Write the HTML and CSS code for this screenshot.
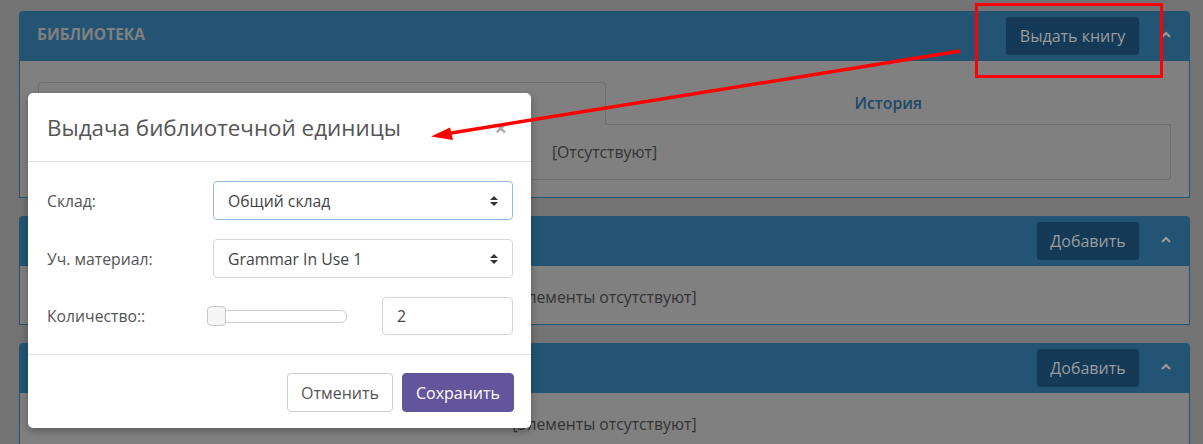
FILE: index.html
```html
<!DOCTYPE html>
<html lang="ru">

<head>
  <meta charset="UTF-8">
  <title>Библиотека</title>
  <link rel="stylesheet" href="styles.css">
</head>

<body>
  <div class="page">
    <!-- библиотека -->
    <div class="panel">
      <div class="panel-head">
        <div class="panel-title">БИБЛИОТЕКА</div>
        <button class="head-btn wide">Выдать книгу</button>
        <div class="collapse">
          <svg width="12" height="8" viewBox="0 0 12 8"><path d="M2 6 L6 2 L10 6" fill="none" stroke="#9a9a9a" stroke-width="2.2"/></svg>
        </div>
      </div>
      <div class="panel-body">
        <div class="tabs">
          <div class="tab active"></div>
          <div class="tab">История</div>
        </div>
        <div class="tab-content">[Отсутствуют]</div>
      </div>
    </div>

    <div class="panel">
      <div class="panel-head">
        <div class="panel-title"></div>
        <button class="head-btn">Добавить</button>
        <div class="collapse">
          <svg width="12" height="8" viewBox="0 0 12 8"><path d="M2 6 L6 2 L10 6" fill="none" stroke="#9a9a9a" stroke-width="2.2"/></svg>
        </div>
      </div>
      <div class="panel-body plain">[Элементы отсутствуют]</div>
    </div>

    <div class="panel">
      <div class="panel-head">
        <div class="panel-title"></div>
        <button class="head-btn">Добавить</button>
        <div class="collapse">
          <svg width="12" height="8" viewBox="0 0 12 8"><path d="M2 6 L6 2 L10 6" fill="none" stroke="#9a9a9a" stroke-width="2.2"/></svg>
        </div>
      </div>
      <div class="panel-body plain">[Элементы отсутствуют]</div>
    </div>
  </div>

  <!-- модальное окно -->
  <div class="modal">
    <div class="modal-header">
      <div class="modal-title">Выдача библиотечной единицы</div>
      <span class="close">×</span>
    </div>
    <div class="modal-body">
      <div class="form-row">
        <label>Склад:</label>
        <div class="select focus">
          <span>Общий склад</span>
          <svg width="10" height="12" viewBox="0 0 10 12"><path d="M1 5 L5 1 L9 5 Z M1 7 L5 11 L9 7 Z" fill="#333"/></svg>
        </div>
      </div>
      <div class="form-row">
        <label>Уч. материал:</label>
        <div class="select">
          <span>Grammar In Use 1</span>
          <svg width="10" height="12" viewBox="0 0 10 12"><path d="M1 5 L5 1 L9 5 Z M1 7 L5 11 L9 7 Z" fill="#333"/></svg>
        </div>
      </div>
      <div class="form-row">
        <label>Количество::</label>
        <div class="count">
          <div class="slider">
            <div class="thumb"></div>
          </div>
          <div class="num">2</div>
        </div>
      </div>
    </div>
    <div class="modal-footer">
      <button class="btn cancel">Отменить</button>
      <button class="btn save">Сохранить</button>
    </div>
  </div>

  <!-- пометка на скриншоте -->
  <svg class="annotation" width="1203" height="444" viewBox="0 0 1203 444">
    <rect x="976.5" y="4.5" width="185" height="72" fill="none" stroke="#ff0000" stroke-width="3"/>
    <line x1="960" y1="51" x2="448" y2="133.5" stroke="#ff0000" stroke-width="3.5"/>
    <path d="M431 136.5 L450 127.5 L453 140 Z" fill="#ff0000"/>
  </svg>
</body>

</html>
```

FILE: styles.css
```css
html,
body {
  height: 444px;
  overflow: hidden;
}

body {
  margin: 0;
  background-color: #737373;
  font-family: "Open Sans", "Noto Sans", sans-serif;
  font-size: 15.75px;
  color: #333;
}

button {
  font-family: inherit;
}

.page {
  height: 444px;
  overflow: hidden;
  padding: 11px 13px 0 19px;
  box-sizing: border-box;
}

.panel {
  margin-bottom: 18px;
}

.panel-head {
  height: 50px;
  background-color: #245474;
  border-radius: 4px 4px 0 0;
  display: flex;
  align-items: center;
  padding-left: 18px;
}

.panel-title {
  flex: 1;
  font-size: 15.5px;
  font-weight: bold;
  color: #808080;
  margin-top: -4px;
}

.head-btn {
  height: 38px;
  width: 102px;
  background-color: #143a58;
  color: #9c9c9c;
  border: none;
  border-radius: 3px;
  font-size: 16px;
}

.head-btn.wide {
  width: 133px;
}

.collapse {
  width: 51px;
  display: flex;
  justify-content: center;
  padding-left: 2px;
  padding-bottom: 2px;
  box-sizing: border-box;
}

.panel-body {
  background-color: #808080;
  border: 1px solid #245474;
  border-top: none;
  padding: 21px 18px 17px;
}

.panel-body.plain {
  padding: 0;
  height: 58px;
  line-height: 62px;
  text-align: center;
}

.tabs {
  display: flex;
  height: 43px;
}

.tab {
  flex: 1;
  display: flex;
  justify-content: center;
  align-items: center;
  color: #1f4868;
  font-weight: 600;
  border-bottom: 1px solid #6e6e6e;
}

.tab.active {
  border: 1px solid #6e6e6e;
  border-bottom: none;
  border-radius: 4px 4px 0 0;
}

.tab-content {
  height: 54px;
  border: 1px solid #6e6e6e;
  border-top: none;
  border-radius: 0 0 4px 4px;
  display: flex;
  justify-content: center;
  align-items: center;
}

/* модальное окно */
.modal {
  position: absolute;
  left: 28px;
  top: 93px;
  width: 503px;
  background-color: #fff;
  border-radius: 5px;
  box-shadow: 0 3px 9px rgba(0, 0, 0, 0.3);
  color: #555;
}

.modal-header {
  padding: 19px 19px;
  border-bottom: 1px solid #e0e0e0;
  display: flex;
  align-items: center;
  height: 30px;
}

.modal-title {
  flex: 1;
  font-size: 22.4px;
  color: #555;
}

.close {
  font-size: 22px;
  font-weight: bold;
  color: #aaa;
  margin-right: 5px;
}

.modal-body {
  padding: 19px 18px 19px 19px;
  display: flex;
  flex-direction: column;
  gap: 19px;
}

.form-row {
  display: flex;
  align-items: center;
}

.form-row label {
  width: 166px;
  color: #555;
}

.select {
  flex: 1;
  height: 37px;
  border: 1px solid #d6d6d6;
  border-radius: 4px;
  display: flex;
  align-items: center;
  justify-content: space-between;
  padding: 0 13px 0 14px;
  color: #444;
}

.select.focus {
  border-color: #8fbbe8;
}

.count {
  flex: 1;
  display: flex;
  align-items: center;
  margin-left: -6px;
}

.slider {
  width: 138px;
  height: 11px;
  border: 1px solid #ccc;
  border-radius: 6px;
  position: relative;
}

.thumb {
  position: absolute;
  left: -1px;
  top: -5px;
  width: 17px;
  height: 18px;
  background-color: #f5f5f5;
  border: 1px solid #c8c8c8;
  border-radius: 4px;
}

.num {
  margin-left: auto;
  width: 115px;
  height: 36px;
  border: 1px solid #d6d6d6;
  border-radius: 4px;
  display: flex;
  align-items: center;
  padding-left: 14px;
  color: #444;
}

.modal-footer {
  border-top: 1px solid #e0e0e0;
  padding: 18px 17px 16px;
  display: flex;
  justify-content: flex-end;
  gap: 9px;
}

.btn {
  height: 39px;
  border-radius: 4px;
  font-size: 16px;
  padding: 0 10px;
}

.cancel {
  background-color: #fff;
  border: 1px solid #ccc;
  color: #555;
  width: 106px;
}

.save {
  background-color: #63559b;
  border: 1px solid #63559b;
  color: #fff;
  width: 112px;
}

.annotation {
  position: absolute;
  left: 0;
  top: 0;
  pointer-events: none;
}
```
